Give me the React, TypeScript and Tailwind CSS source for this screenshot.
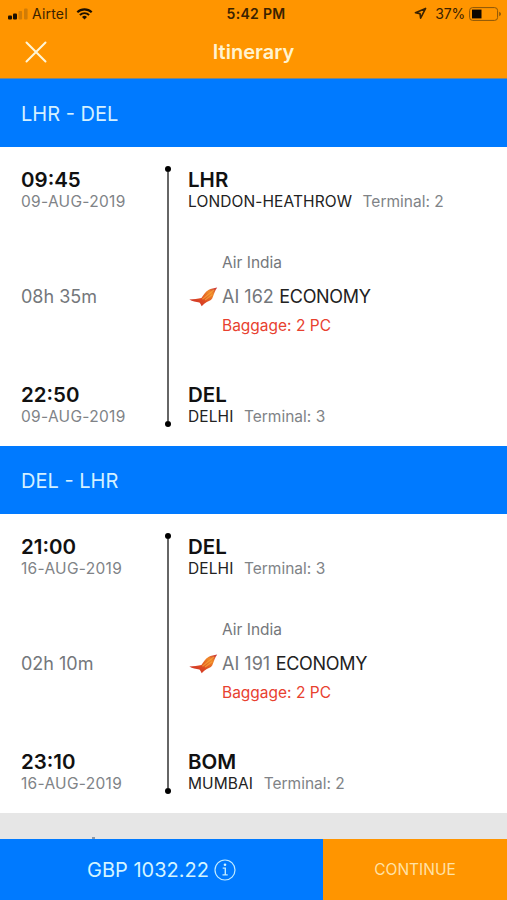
import React from 'react';

interface Stop {
  time: string;
  date: string;
  code: string;
  city: string;
  terminal: string;
}

interface Leg {
  title: string;
  departure: Stop;
  arrival: Stop;
  duration: string;
  airline: string;
  flight: string;
  cabin: string;
  baggage: string;
}

const legs: Leg[] = [
  {
    title: 'LHR - DEL',
    departure: { time: '09:45', date: '09-AUG-2019', code: 'LHR', city: 'LONDON-HEATHROW', terminal: '2' },
    arrival: { time: '22:50', date: '09-AUG-2019', code: 'DEL', city: 'DELHI', terminal: '3' },
    duration: '08h 35m',
    airline: 'Air India',
    flight: 'AI 162',
    cabin: 'ECONOMY',
    baggage: '2 PC',
  },
  {
    title: 'DEL - LHR',
    departure: { time: '21:00', date: '16-AUG-2019', code: 'DEL', city: 'DELHI', terminal: '3' },
    arrival: { time: '23:10', date: '16-AUG-2019', code: 'BOM', city: 'MUMBAI', terminal: '2' },
    duration: '02h 10m',
    airline: 'Air India',
    flight: 'AI 191',
    cabin: 'ECONOMY',
    baggage: '2 PC',
  },
];

const StatusBar: React.FC = () => (
  <div className="grid h-[27px] grid-cols-3 items-center pl-2 pr-[5px] text-[14px] text-[#3a2200]">
    <div className="flex items-center">
      <svg width="20" height="12" viewBox="0 0 20 12" className="mr-1">
        <rect x="0" y="7.5" width="4" height="4" rx="1" fill="#1c1000" />
        <rect x="5" y="5.5" width="4" height="6" rx="1" fill="#1c1000" />
        <rect x="10.5" y="3" width="3.6" height="8.5" rx="1" fill="#d17c06" />
        <rect x="16" y="0.5" width="3.6" height="11" rx="1" fill="#d17c06" />
      </svg>
      <span className="tracking-[0.2px]">Airtel</span>
      <svg width="17" height="12" viewBox="0 0 18 13" className="ml-[8px]" fill="none" stroke="#1c1000">
        <path d="M1.2 4.6a11.2 11.2 0 0 1 15.6 0" strokeWidth="2.3" />
        <path d="M4 7.6a7.2 7.2 0 0 1 10 0" strokeWidth="2.1" />
        <path d="M9 12.4 6.3 9.7a3.9 3.9 0 0 1 5.4 0z" fill="#1c1000" stroke="none" />
      </svg>
    </div>
    <div className="pl-[2px] text-center font-semibold tracking-[0.3px]">5:42 PM</div>
    <div className="flex items-center justify-end">
      <svg width="13" height="13" viewBox="0 0 13 13" className="mr-2" fill="none">
        <path d="M11.6 1.4 1.4 5.8l4.6.8.6 4.6z" stroke="#3a2200" strokeWidth="1.6" strokeLinejoin="round" />
      </svg>
      <span className="mr-1 tracking-[-0.2px]">37%</span>
      <svg width="33" height="14" viewBox="0 0 33 14">
        <rect x="0.6" y="0.6" width="28" height="12.8" rx="3" fill="none" stroke="#8a5608" />
        <rect x="3" y="2.6" width="9.5" height="8.8" fill="#0d0700" />
        <path d="M30.2 4.8q1.8.8 1.8 2.2t-1.8 2.2z" fill="#8a5608" />
      </svg>
    </div>
  </div>
);

const AirlineLogo: React.FC = () => (
  <svg width="29" height="20" viewBox="0 0 29 20">
    <defs>
      <linearGradient id="tail" x1="0" y1="1" x2="1" y2="0">
        <stop offset="0" stopColor="#c92a2c" />
        <stop offset="0.4" stopColor="#dd4a22" />
        <stop offset="0.75" stopColor="#f08a2a" />
        <stop offset="1" stopColor="#c3263a" />
      </linearGradient>
    </defs>
    <path
      d="M0.3 12.6C4.5 12 9 12 12.4 11C14.6 8 16.4 4.6 19.4 3C22 1.8 25 1 28.2 0.6C26 3.4 25 7.6 23.2 11.4C22 13.6 18.4 14.2 15.6 16.4C14.4 17.4 13.4 18.6 12.6 19.2C12 17.6 11.4 16.8 10.4 15.6C7 15 3.4 14.4 0.3 12.6Z"
      fill="url(#tail)"
    />
    <path d="M13.4 12.2 25 3M16 13 23 7.8" stroke="#f9a93a" strokeWidth="1.4" opacity="0.7" />
  </svg>
);

const StopInfo: React.FC<{ stop: Stop }> = ({ stop }) => (
  <div>
    <div className="text-[20.5px] font-semibold leading-[21px] text-[#111]">{stop.code}</div>
    <div className="flex gap-[10.5px] text-[15.5px] leading-[23px]">
      <span className="tracking-[0.1px] text-[#222]">{stop.city}</span>
      <span className="text-[#808387]">Terminal: {stop.terminal}</span>
    </div>
  </div>
);

const StopTime: React.FC<{ stop: Stop }> = ({ stop }) => (
  <div>
    <div className="text-[20.5px] font-semibold leading-[21px] text-[#111]">{stop.time}</div>
    <div className="text-[15.5px] leading-[23px] tracking-[0.3px] text-[#808387]">{stop.date}</div>
  </div>
);

const LegSection: React.FC<{ leg: Leg }> = ({ leg }) => (
  <section>
    <h2 className="flex h-[68px] items-center bg-[#007aff] pl-[21px] pt-[2px] text-[20px] text-[#d3f0ff]">
      {leg.title}
    </h2>
    <div className="flex h-[299px] bg-white pb-[18px] pl-[21px] pt-[22px]">
      <div className="flex w-[143px] flex-col justify-between">
        <StopTime stop={leg.departure} />
        <div className="pb-[3px] text-[18px] leading-[22px] text-[#74777b]">{leg.duration}</div>
        <StopTime stop={leg.arrival} />
      </div>

      {/* Timeline */}
      <div className="-mt-[3px] flex h-[261px] w-[7px] flex-col items-center">
        <span className="size-[6px] shrink-0 rounded-full bg-black" />
        <span className="w-[2px] flex-1 bg-[#666]" />
        <span className="size-[6px] shrink-0 rounded-full bg-black" />
      </div>

      <div className="flex flex-1 flex-col justify-between pl-[17px]">
        <StopInfo stop={leg.departure} />
        <div className="pb-[8px]">
          <div className="pl-[34px] text-[15.5px] leading-[20px] text-[#74777b]">{leg.airline}</div>
          <div className="mt-[12px] flex h-6 items-center text-[18px]">
            <div className="w-[34px] pl-[1px]">
              <AirlineLogo />
            </div>
            <span className="text-[#74777b]">{leg.flight}</span>
            <span className="ml-[5.5px] tracking-[-0.3px] text-[#222]">{leg.cabin}</span>
          </div>
          <div className="mb-[1px] mt-[7px] pl-[34px] text-[15.5px] leading-[20px] text-[#e8412f]">
            Baggage: {leg.baggage}
          </div>
        </div>
        <StopInfo stop={leg.arrival} />
      </div>
    </div>
  </section>
);

export default function App() {
  return (
    <div className="flex h-[900px] w-[507px] flex-col overflow-hidden bg-[#e6e6e6] font-['Inter',sans-serif]">
      <header className="h-[79px] shrink-0 border-b border-[#7d8583] bg-[#ff9500]">
        <StatusBar />
        <div className="grid h-[50px] grid-cols-[1fr_auto_1fr] items-center">
          <button type="button" aria-label="Close" className="ml-[25px] w-[22px]">
            <svg width="22" height="22" viewBox="0 0 22 22" stroke="#fff6d8" strokeWidth="2" strokeLinecap="round">
              <path d="M1.5 1.5 20.5 20.5M20.5 1.5 1.5 20.5" />
            </svg>
          </button>
          <h1 className="text-[20px] font-semibold text-[#fff3d0]">Itinerary</h1>
        </div>
      </header>

      <main className="flex-1 overflow-hidden">
        {legs.map((leg) => (
          <LegSection key={leg.title} leg={leg} />
        ))}
        {/* Next row peeking out above the footer */}
        <div className="ml-[92px] mt-[24px] h-[2px] w-[3px] bg-[#8b98a8]" />
      </main>

      <footer className="flex h-[61px] shrink-0">
        <button type="button" className="flex w-[323px] items-center justify-center gap-[5px] bg-[#007aff] text-[20px] text-[#d3f4ff]">
          <span>GBP 1032.22</span>
          <svg width="22" height="22" viewBox="0 0 22 22" fill="none" stroke="#bfeaff">
            <circle cx="11" cy="11" r="10" strokeWidth="1.2" />
            <circle cx="11" cy="5.8" r="1.3" fill="#d3f4ff" stroke="none" />
            <path d="M8.7 9.1h2.6v6.6M8.5 15.9h5.2" strokeWidth="1.4" />
          </svg>
        </button>
        <button type="button" className="flex-1 bg-[#ff9500] pt-[1px] text-[15.5px] text-[#ffe2a6]">
          CONTINUE
        </button>
      </footer>
    </div>
  );
}
